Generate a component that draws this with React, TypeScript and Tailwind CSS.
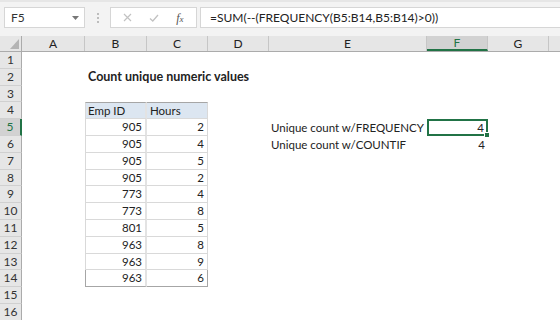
import React from 'react';

const FONT = { fontFamily: 'Lato, "Open Sans", sans-serif' };

const cols = [
  { id: 'A', w: 'w-[63px]' },
  { id: 'B', w: 'w-[62px]' },
  { id: 'C', w: 'w-[61px]' },
  { id: 'D', w: 'w-[61px]' },
  { id: 'E', w: 'w-[158px]' },
  { id: 'F', w: 'w-[61px]' },
  { id: 'G', w: 'w-[61px]' },
];

const data: [number, number][] = [
  [905, 2],
  [905, 4],
  [905, 5],
  [905, 2],
  [773, 4],
  [773, 8],
  [801, 5],
  [963, 8],
  [963, 9],
  [963, 6],
];

// rows 3, 8 and 13 are a pixel shorter, the sheet was scaled down a bit
const rowH = (r: number) => (r === 3 || r === 8 || r === 13 ? 'h-[16px]' : 'h-[17px]');

function Toolbar() {
  return (
    <div className="h-[36px] bg-[#f3f3f3] border-t-[2px] border-[#e6e6e6] flex items-start pt-[5px] pl-[4px]">
      <div className="w-[81px] h-[21px] bg-white border border-[#d6d6d6] flex items-center justify-between pl-[6px] pr-[5px] text-[12px] text-[#333]">
        <span>F5</span>
        <svg width="7" height="4" viewBox="0 0 7 4">
          <path d="M0 0 L7 0 L3.5 4 Z" fill="#777" />
        </svg>
      </div>
      <div className="w-[25px] h-[21px] flex flex-col items-center justify-center gap-[2px]">
        <span className="w-[2px] h-[2px] bg-[#bdbdbd]" />
        <span className="w-[2px] h-[2px] bg-[#bdbdbd]" />
        <span className="w-[2px] h-[2px] bg-[#bdbdbd]" />
      </div>
      <div className="w-[87px] h-[21px] bg-white border border-[#d6d6d6] flex items-center justify-around px-[4px]">
        <svg width="9" height="9" viewBox="0 0 9 9">
          <path d="M1 1 L8 8 M8 1 L1 8" stroke="#c2c2c2" strokeWidth="1.2" />
        </svg>
        <svg width="10" height="8" viewBox="0 0 10 8">
          <path d="M1 4.5 L3.8 7 L9 1" stroke="#c2c2c2" strokeWidth="1.3" fill="none" />
        </svg>
        <span className="text-[12px] italic text-[#555] leading-none" style={{ fontFamily: '"Liberation Serif", serif' }}>
          f<span className="text-[9px]">x</span>
        </span>
      </div>
      <div className="ml-[3px] flex-1 h-[21px] bg-white border border-[#d6d6d6] border-r-0 flex items-center pl-[9px] text-[12px] text-[#222]">
        =SUM(--(FREQUENCY(B5:B14,B5:B14)&gt;0))
      </div>
    </div>
  );
}

function HeaderRow() {
  return (
    <div className="flex h-[16px] bg-[#e6e6e6] border-b border-[#ababab]">
      <div className="w-[22px] shrink-0 border-r border-[#ababab] flex items-end justify-end pr-[2px] pb-[2px]">
        <svg width="9" height="10" viewBox="0 0 9 10">
          <path d="M9 0 L9 10 L0 10 Z" fill="#b4b4b4" />
        </svg>
      </div>
      {cols.map((c) => (
        <div
          key={c.id}
          className={`${c.w} shrink-0 flex items-center justify-center text-[12px] border-r ${
            c.id === 'F'
              ? 'bg-[#d2d2d2] text-[#217346] border-b-[2px] border-b-[#217346] border-r-[#c6c6c6]'
              : 'text-[#222] border-[#c6c6c6]'
          }`}
        >
          {c.id}
        </div>
      ))}
      <div className="flex-1" />
    </div>
  );
}

function Cell({ w, children, className = '' }: { w: string; children?: React.ReactNode; className?: string }) {
  return <div className={`${w} shrink-0 flex items-center text-[11.5px] text-[#222] ${className}`}>{children}</div>;
}

function SheetRow({ r }: { r: number }) {
  const inTable = r >= 4 && r <= 14;
  const rec = r >= 5 && r <= 14 ? data[r - 5] : null;
  const tableBorder = inTable ? (r === 14 ? 'border-b border-[#a6a6a6]' : 'border-b border-[#d9d9d9]') : '';

  return (
    <div className={`flex ${rowH(r)}`}>
      <div
        className={`w-[22px] shrink-0 flex items-center justify-center text-[12px] ${
          r === 5
            ? 'bg-[#d2d2d2] text-[#217346] border-r-[2px] border-[#217346]'
            : 'bg-[#e6e6e6] text-[#333] border-r border-[#ababab]'
        } border-b border-b-[#d0d0d0]`}
      >
        {r}
      </div>
      <Cell w="w-[63px]" />
      {r === 2 ? (
        <Cell w="w-[62px]" className="pl-[3px] font-bold text-[12.5px] whitespace-nowrap overflow-visible">
          Count unique numeric values
        </Cell>
      ) : inTable ? (
        <>
          <Cell
            w="w-[62px]"
            className={`border-l border-[#a6a6a6] border-r-[2px] border-r-[#e3e3e3] ${tableBorder} ${
              r === 4 ? 'bg-[#dce6f1] pl-[2px] border-t border-t-[#a6a6a6]' : 'justify-end pr-[3px]'
            }`}
          >
            {r === 4 ? 'Emp ID' : rec?.[0]}
          </Cell>
          <Cell
            w="w-[61px]"
            className={`border-r border-[#a6a6a6] ${tableBorder} ${
              r === 4 ? 'bg-[#dce6f1] pl-[3px] border-t border-t-[#a6a6a6]' : 'justify-end pr-[3px]'
            }`}
          >
            {r === 4 ? 'Hours' : rec?.[1]}
          </Cell>
        </>
      ) : (
        <>
          <Cell w="w-[62px]" />
          <Cell w="w-[61px]" />
        </>
      )}
      <Cell w="w-[61px]" />
      <Cell w="w-[158px]" className="pl-[2px] text-[11.3px] whitespace-nowrap">
        {r === 5 && 'Unique count w/FREQUENCY'}
        {r === 6 && 'Unique count w/COUNTIF'}
      </Cell>
      {r === 5 ? (
        <Cell w="w-[61px]" className="relative justify-end pr-[2px] border-[2px] border-[#217346]">
          4
          <span className="absolute right-[-4px] bottom-[-4px] w-[6px] h-[6px] bg-[#217346] border border-white" />
        </Cell>
      ) : (
        <Cell w="w-[61px]" className="justify-end pr-[3px]">
          {r === 6 && '4'}
        </Cell>
      )}
      <Cell w="w-[61px]" />
    </div>
  );
}

export default function App() {
  const rows = Array.from({ length: 16 }, (_, i) => i + 1);
  return (
    <div className="w-[560px] h-[320px] overflow-hidden bg-white" style={FONT}>
      <Toolbar />
      <HeaderRow />
      {rows.map((r) => (
        <SheetRow key={r} r={r} />
      ))}
    </div>
  );
}
